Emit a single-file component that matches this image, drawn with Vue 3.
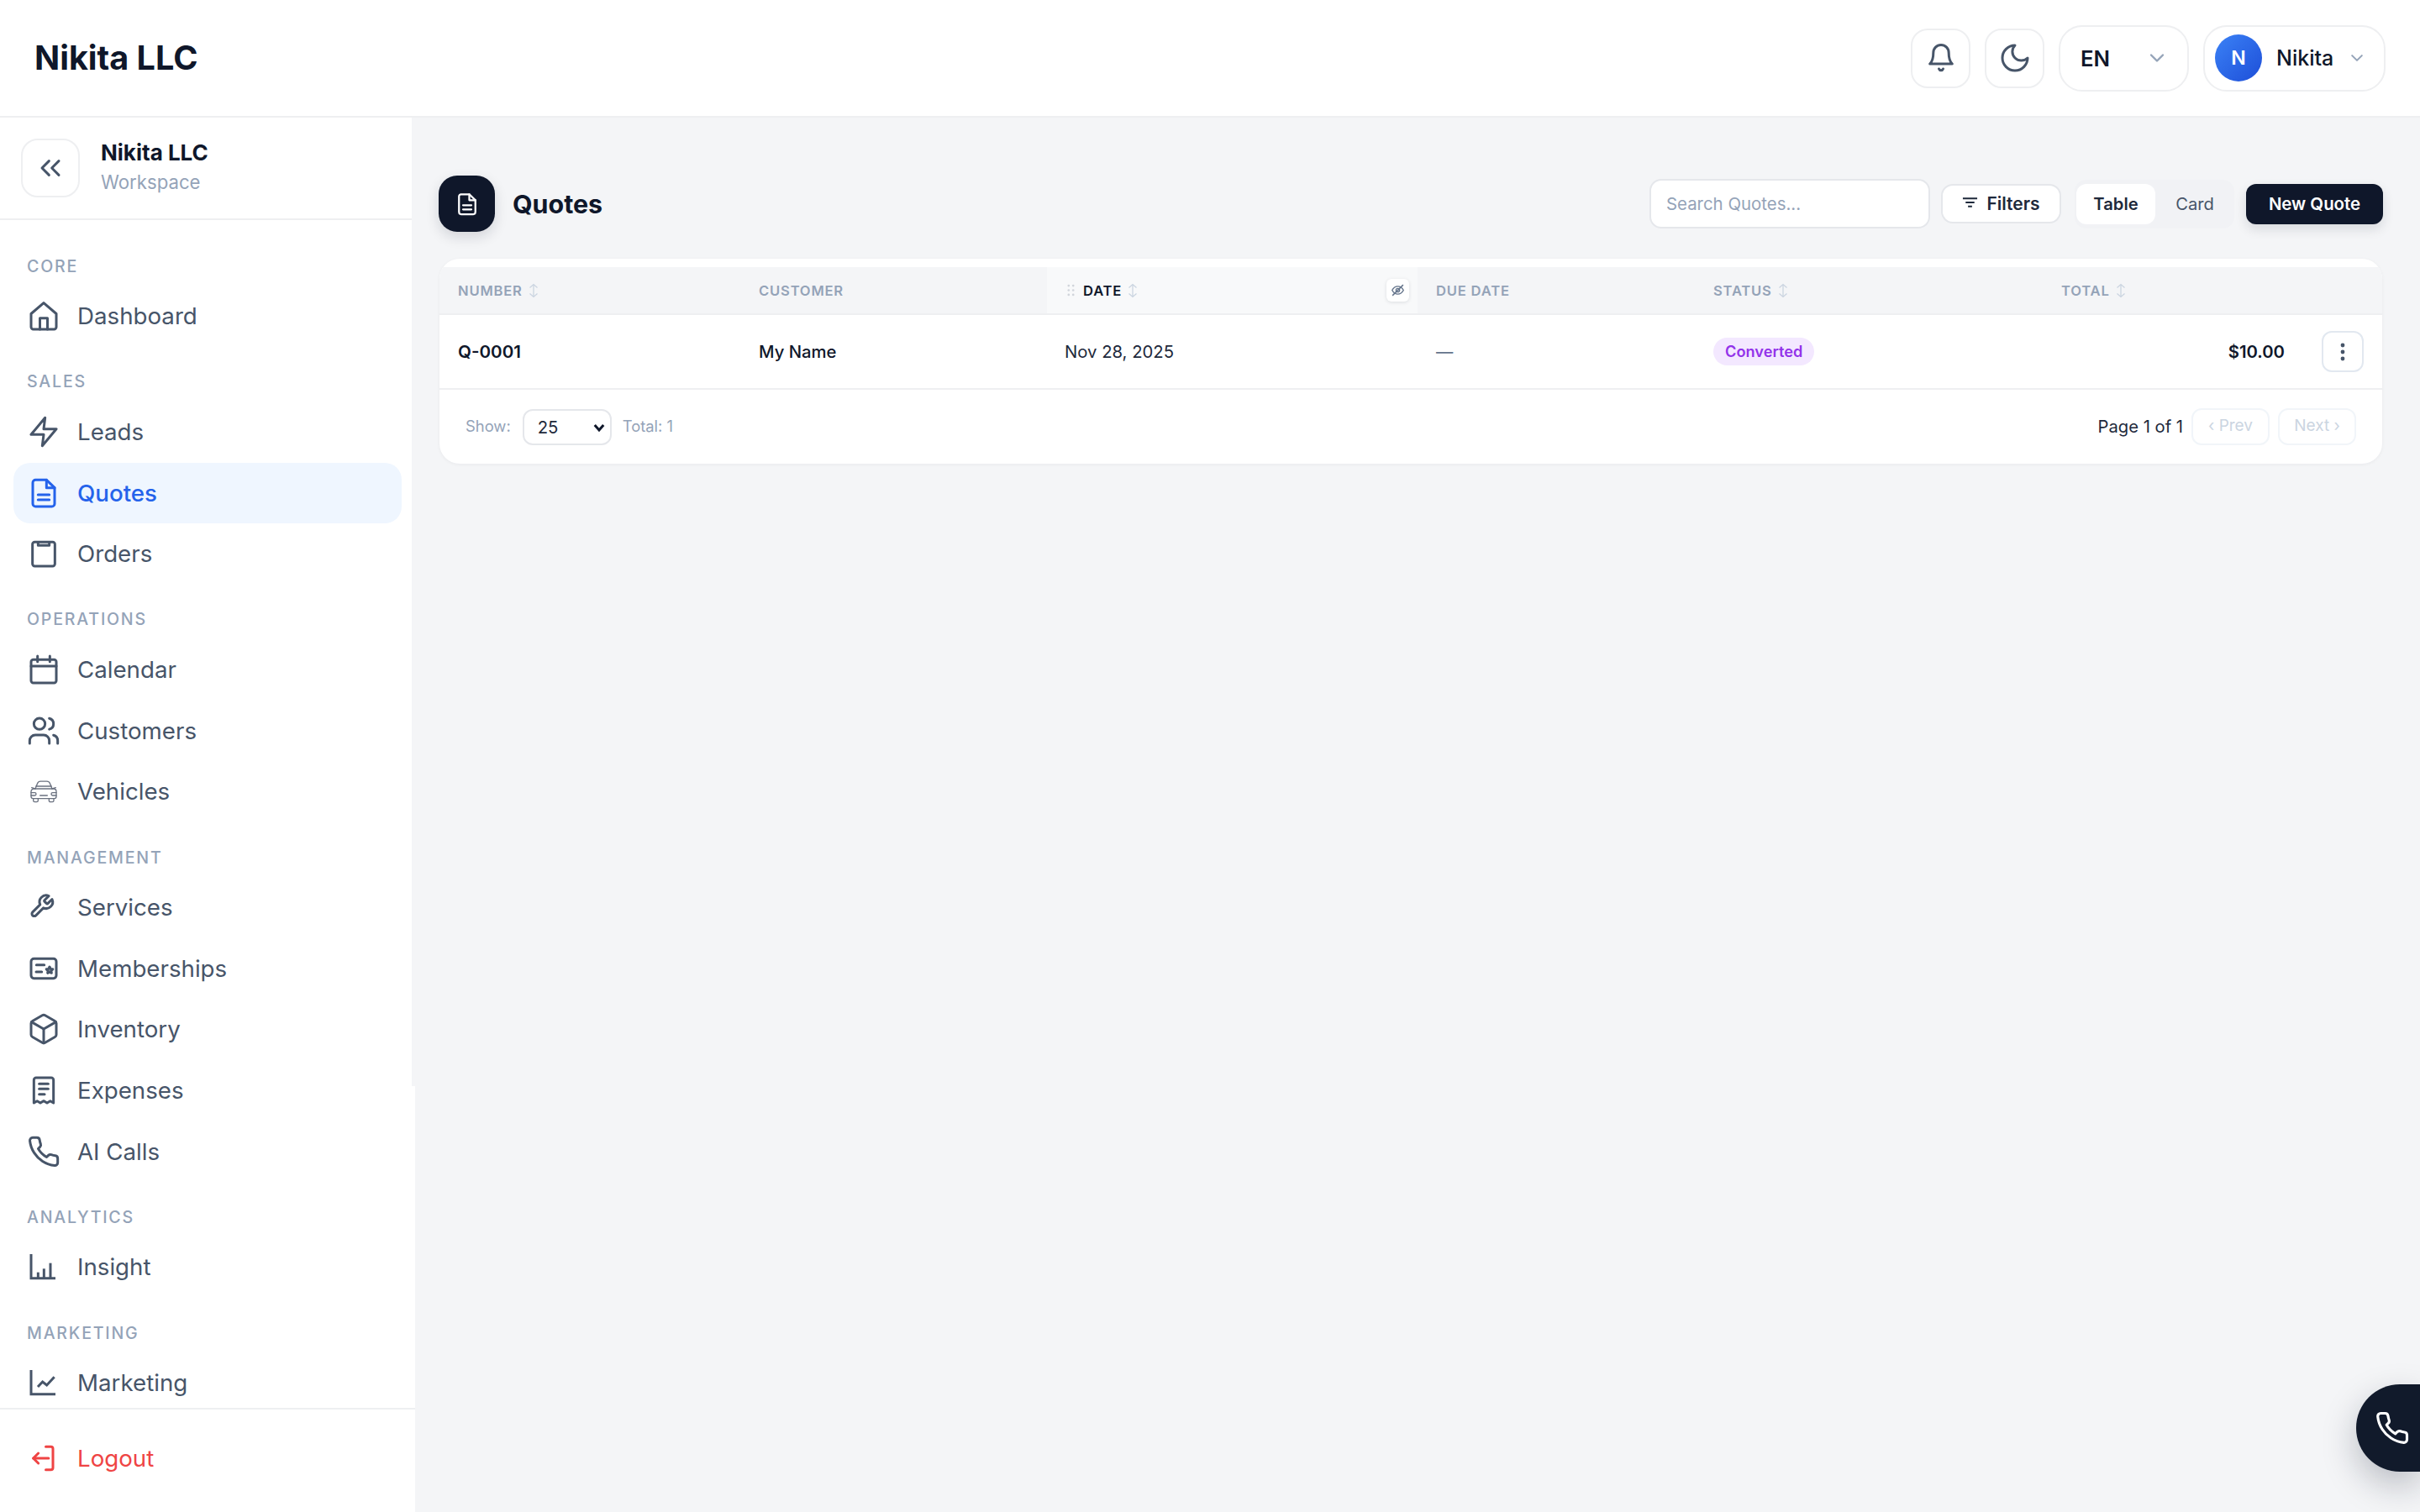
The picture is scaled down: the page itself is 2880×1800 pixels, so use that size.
<script setup>
const sections = [
  { label: 'Core', items: [
    { name: 'Dashboard', icon: ['M3 10.5 12 2.8l9 7.7V20a1.6 1.6 0 0 1-1.6 1.6H4.6A1.6 1.6 0 0 1 3 20Z', 'M9.3 21.6v-8h5.4v8'] },
  ] },
  { label: 'Sales', items: [
    { name: 'Leads', icon: ['M13 2 3 14h9l-1 8 10-12h-9l1-8Z'] },
    { name: 'Quotes', active: true, icon: ['M14 2.6H6.2A2 2 0 0 0 4.2 4.6v15a2 2 0 0 0 2 2h11.6a2 2 0 0 0 2-2V8.2Z', 'M14 2.6v5.6h5.8', 'M8 13.2h8', 'M8 16.8h8'] },
    { name: 'Orders', icon: ['M5.6 3.8h12.8A1.6 1.6 0 0 1 20 5.4v14a1.6 1.6 0 0 1-1.6 1.6H5.6A1.6 1.6 0 0 1 4 19.4v-14a1.6 1.6 0 0 1 1.6-1.6Z', 'M8 4v2.200h8V4'] },
  ] },
  { label: 'Operations', items: [
    { name: 'Calendar', icon: ['M4.6 5h14.8A1.6 1.6 0 0 1 21 6.6v13.4a1.6 1.6 0 0 1-1.6 1.6H4.6A1.6 1.6 0 0 1 3 20V6.6A1.6 1.6 0 0 1 4.6 5Z', 'M7.6 2.4v4', 'M16.4 2.4v4', 'M3 9.6h18'] },
    { name: 'Customers', icon: ['M16 21v-2a4 4 0 0 0-4-4H6a4 4 0 0 0-4 4v2', 'M13 7a4 4 0 1 1-8 0 4 4 0 0 1 8 0Z', 'M22 21v-2a4 4 0 0 0-3-3.87', 'M16 3.13a4 4 0 0 1 0 7.75'] },
    { name: 'Vehicles', thin: true, icon: ['M6 10.2 7.5 6.4a2.4 2.4 0 0 1 2.2-1.5h4.6a2.4 2.4 0 0 1 2.2 1.5L18 10.2', 'M5 10.2h14a2 2 0 0 1 2 2v3.6a1.4 1.4 0 0 1-1.4 1.4H4.400a1.400 1.400 0 0 1-1.400-1.400v-3.600a2 2 0 0 1 2-2Z', 'M6 10.200 3.400 9.400M18 10.200l2.600-.800', 'M6.500 8.400h11', 'M3 13h2.600a1 1 0 0 1 0 2H3M21 13h-2.600a1 1 0 0 0 0 2H21', 'M9.400 15h5.200', 'M4.600 17.200v1.400a1 1 0 0 0 1 1h1.400a1 1 0 0 0 1-1v-1.400M15.800 17.200v1.400a1 1 0 0 0 1 1h1.400a1 1 0 0 0 1-1v-1.400'] },
  ] },
  { label: 'Management', items: [
    { name: 'Services', icon: ['M12.7 6.900a.78.78 0 0 0 0 1.100l1.250 1.250a.78.78 0 0 0 1.100 0l2.940-2.940a4.680 4.680 0 0 1-6.190 6.190l-5.390 5.390a1.650 1.650 0 0 1-2.340-2.340l5.390-5.390a4.680 4.680 0 0 1 6.190-6.190l-2.930 2.930Z'] },
    { name: 'Memberships', icon: ['M5 5h14a2 2 0 0 1 2 2v10a2 2 0 0 1-2 2H5a2 2 0 0 1-2-2V7a2 2 0 0 1 2-2Z', 'M6.800 9.400h5.600', 'M6.600 14.400h4', 'M16.200 10.800l.7 1.500 1.600.2-1.200 1.100.3 1.600-1.400-.8-1.400.8.3-1.600-1.200-1.100 1.600-.2Z'] },
    { name: 'Inventory', icon: ['M21 8a2 2 0 0 0-1-1.730l-7-4a2 2 0 0 0-2 0l-7 4A2 2 0 0 0 3 8v8a2 2 0 0 0 1 1.730l7 4a2 2 0 0 0 2 0l7-4A2 2 0 0 0 21 16Z', 'M3.300 7 12 12l8.700-5', 'M12 22V12'] },
    { name: 'Expenses', icon: ['M5 21V4.600A1.600 1.600 0 0 1 6.600 3h10.800A1.600 1.600 0 0 1 19 4.600V21l-2.300-1.400-2.300 1.400-2.400-1.400-2.400 1.400-2.300-1.400Z', 'M8.800 7.400h6.400', 'M8.800 11h6.400', 'M8.800 14.800h3.800'] },
    { name: 'AI Calls', icon: ['M22 16.920v3a2 2 0 0 1-2.180 2 19.790 19.790 0 0 1-8.630-3.070 19.500 19.500 0 0 1-6-6 19.790 19.790 0 0 1-3.070-8.670A2 2 0 0 1 4.110 2h3a2 2 0 0 1 2 1.720c.127.960.361 1.903.700 2.810a2 2 0 0 1-.450 2.110L8.090 9.910a16 16 0 0 0 6 6l1.270-1.270a2 2 0 0 1 2.110-.450c.907.339 1.850.573 2.810.700A2 2 0 0 1 22 16.920Z'] },
  ] },
  { label: 'Analytics', items: [
    { name: 'Insight', square: true, icon: ['M3 3v17.200h17.400', 'M8 20v-4', 'M12.200 20v-6.600', 'M16.800 20v-10.600'] },
  ] },
  { label: 'Marketing', items: [
    { name: 'Marketing', square: true, icon: ['M3 3v17.200h17.400', 'M7.800 15l3.400-3.600 3 2.400 5.400-5.800'] },
  ] },
];

const columns = [
  { key: 'number', label: 'Number', sort: true },
  { key: 'customer', label: 'Customer' },
  { key: 'date', label: 'Date', sort: true, hovered: true },
  { key: 'due', label: 'Due Date' },
  { key: 'status', label: 'Status', sort: true },
  { key: 'total', label: 'Total', sort: true },
  { key: 'actions', label: '' },
];
</script>

<template>
  <div class="app">
    <header class="topbar">
      <div class="brand">Nikita LLC</div>
      <div class="topbar-actions">
        <button type="button" class="icon-btn" aria-label="Notifications">
          <svg class="icon" viewBox="0 0 24 24"><path d="M6.500 8.200a5.500 5.500 0 0 1 11 0c0 4.200.8 6.400 2.500 8H4c1.700-1.600 2.500-3.800 2.500-8Z" /><path d="M10.500 19.800a1.600 1.600 0 0 0 3 0" /></svg>
        </button>
        <button type="button" class="icon-btn" aria-label="Theme">
          <svg class="icon" viewBox="0 0 24 24"><path d="M12 3a6 6 0 0 0 9 9 9 9 0 1 1-9-9Z" /></svg>
        </button>
        <button type="button" class="pill-btn lang-btn">
          <span>EN</span>
          <svg class="chev" viewBox="0 0 24 24"><path d="m5 8.500 7 7 7-7" /></svg>
        </button>
        <button type="button" class="pill-btn user-btn">
          <span class="avatar">N</span>
          <span class="user-name">Nikita</span>
          <svg class="chev chev-sm" viewBox="0 0 24 24"><path d="m5 8.500 7 7 7-7" /></svg>
        </button>
      </div>
    </header>

    <div class="body">
      <aside class="sidebar">
        <div class="workspace">
          <button type="button" class="collapse-btn" aria-label="Collapse">
            <svg class="icon" viewBox="0 0 24 24"><path d="m11 17-5-5 5-5" /><path d="m18 17-5-5 5-5" /></svg>
          </button>
          <div class="ws-text">
            <div class="ws-name">Nikita LLC</div>
            <div class="ws-sub">Workspace</div>
          </div>
        </div>

        <nav class="nav">
          <section v-for="s in sections" :key="s.label" class="nav-section">
            <div class="nav-label">{{ s.label }}</div>
            <a
              v-for="item in s.items"
              :key="item.name"
              class="nav-item"
              :class="{ active: item.active }"
            >
              <svg class="icon" :class="{ thin: item.thin, square: item.square }" viewBox="0 0 24 24">
                <path v-for="d in item.icon" :key="d" :d="d" />
              </svg>
              <span>{{ item.name }}</span>
            </a>
          </section>
        </nav>

        <div class="sidebar-foot">
          <a class="nav-item logout">
            <svg class="icon" viewBox="0 0 24 24"><path d="M13.500 3.700h3.600a1.500 1.500 0 0 1 1.500 1.500v13.600a1.500 1.500 0 0 1-1.500 1.500h-3.600" /><path d="M15.500 12H4.600" /><path d="M8.200 8.400 4.600 12l3.600 3.600" /></svg>
            <span>Logout</span>
          </a>
        </div>
      </aside>

      <main class="main">
        <div class="page-head">
          <div class="page-title">
            <span class="title-icon">
              <svg viewBox="0 0 24 24"><path d="M14 2.600H6.200a2 2 0 0 0-2 2v15a2 2 0 0 0 2 2h11.600a2 2 0 0 0 2-2V8.200Z" /><path d="M14 2.600v5.600h5.800" /><path d="M8 13h8" /><path d="M8 17h8" /></svg>
            </span>
            <h1>Quotes</h1>
          </div>
          <div class="toolbar">
            <input class="search" type="text" placeholder="Search Quotes..." />
            <button type="button" class="filter-btn">
              <svg viewBox="0 0 20 14"><path d="M1 2h18M4.500 7h11M7.500 12h5" /></svg>
              Filters
            </button>
            <div class="view-toggle">
              <span class="view-opt on">Table</span>
              <span class="view-opt">Card</span>
            </div>
            <button type="button" class="new-btn">New Quote</button>
          </div>
        </div>

        <div class="card">
          <table class="table">
            <colgroup>
              <col v-for="c in columns" :key="c.key" :class="'col-' + c.key" />
            </colgroup>
            <thead>
              <tr>
                <th v-for="c in columns" :key="c.key" :class="{ hovered: c.hovered }">
                  <div class="th-inner">
                    <svg v-if="c.hovered" class="grip" viewBox="0 0 10 16">
                      <circle cx="2" cy="2" r="1.500" /><circle cx="8" cy="2" r="1.500" />
                      <circle cx="2" cy="8" r="1.500" /><circle cx="8" cy="8" r="1.500" />
                      <circle cx="2" cy="14" r="1.500" /><circle cx="8" cy="14" r="1.500" />
                    </svg>
                    <span>{{ c.label }}</span>
                    <svg v-if="c.sort" class="sort" viewBox="0 0 12 18"><path d="M6 1.500v15M1.500 5.500 6 1.500l4.500 4M1.500 12.500 6 16.500l4.500-4" /></svg>
                    <span v-if="c.hovered" class="hide-col">
                      <svg viewBox="0 0 24 24"><path d="M3 21 21 3" /><path d="M2.500 12S6 5.500 12 5.500 21.500 12 21.500 12 18 18.500 12 18.500 2.500 12 2.500 12Z" /><path d="M15 12a3 3 0 1 1-6 0 3 3 0 0 1 6 0Z" /></svg>
                    </span>
                  </div>
                </th>
              </tr>
            </thead>
            <tbody>
              <tr>
                <td class="cell-number">Q-0001</td>
                <td class="cell-customer">My Name</td>
                <td class="cell-date">Nov 28, 2025</td>
                <td class="cell-due">—</td>
                <td><span class="badge">Converted</span></td>
                <td class="cell-total">$10.00</td>
                <td>
                  <button type="button" class="kebab" aria-label="Actions">
                    <svg viewBox="0 0 6 24"><circle cx="3" cy="4" r="2.400" /><circle cx="3" cy="12" r="2.400" /><circle cx="3" cy="20" r="2.400" /></svg>
                  </button>
                </td>
              </tr>
            </tbody>
          </table>

          <div class="table-foot">
            <div class="foot-left">
              <span>Show:</span>
              <div class="select-wrap">
                <select class="page-size">
                  <option>25</option>
                  <option>50</option>
                </select>
                <svg viewBox="0 0 24 24"><path d="m5 8 7 8 7-8" /></svg>
              </div>
              <span>Total: 1</span>
            </div>
            <div class="foot-right">
              <span class="page-info">Page 1 of 1</span>
              <button type="button" class="page-btn" disabled>‹ Prev</button>
              <button type="button" class="page-btn" disabled>Next ›</button>
            </div>
          </div>
        </div>
      </main>
    </div>

    <button type="button" class="call-fab" aria-label="Call">
      <svg viewBox="0 0 24 24"><path d="M22 16.920v3a2 2 0 0 1-2.180 2 19.790 19.790 0 0 1-8.630-3.070 19.500 19.500 0 0 1-6-6 19.790 19.790 0 0 1-3.070-8.670A2 2 0 0 1 4.110 2h3a2 2 0 0 1 2 1.720c.127.960.361 1.903.700 2.810a2 2 0 0 1-.450 2.110L8.090 9.910a16 16 0 0 0 6 6l1.270-1.270a2 2 0 0 1 2.110-.450c.907.339 1.850.573 2.810.700A2 2 0 0 1 22 16.920Z" /></svg>
    </button>
  </div>
</template>

<style>
html,
body {
  margin: 0;
  overflow: hidden;
  background: #f4f5f7;
}
</style>

<style scoped>
.app {
  height: 100vh;
  display: flex;
  flex-direction: column;
  font-family: Inter, "Liberation Sans", sans-serif;
  color: #0f172a;
}

button {
  font-family: inherit;
  cursor: pointer;
}

.icon {
  width: 40px;
  height: 40px;
  flex: none;
  fill: none;
  stroke: currentColor;
  stroke-width: 1.8;
  stroke-linecap: round;
  stroke-linejoin: round;
}

.icon.thin {
  stroke-width: 0.8;
  color: #6b7280;
}

.icon.square {
  stroke-linecap: butt;
  stroke-linejoin: miter;
}

/* top bar */
.topbar {
  height: 138px;
  flex: none;
  display: flex;
  align-items: center;
  justify-content: space-between;
  padding: 0 41px;
  background: #fff;
  border-bottom: 2px solid #eeeff1;
}

.brand {
  font-size: 39.600px;
  font-weight: 700;
}

.topbar-actions {
  display: flex;
  align-items: center;
  gap: 17px;
}

.icon-btn {
  width: 71px;
  height: 71px;
  padding: 0;
  display: flex;
  align-items: center;
  justify-content: center;
  background: #fff;
  border: 2px solid #eeeff1;
  border-radius: 20px;
  color: #475569;
}

.pill-btn {
  height: 79px;
  display: flex;
  align-items: center;
  background: #fff;
  border: 2px solid #eeeff1;
  border-radius: 28px;
  color: #0f172a;
  font-size: 25.700px;
  font-weight: 600;
}

.lang-btn {
  width: 155px;
  padding: 0 24px;
  justify-content: space-between;
}

.user-btn {
  width: 217px;
  padding: 0 22px 0 12px;
}

.avatar {
  width: 56px;
  height: 56px;
  border-radius: 50%;
  flex: none;
  display: flex;
  align-items: center;
  justify-content: center;
  background: linear-gradient(135deg, #3b82f6, #1d4ed8);
  color: #fff;
  font-size: 23px;
}

.user-name {
  margin-left: 17px;
  flex: 1;
  text-align: left;
  font-size: 25px;
  font-weight: 500;
}

.chev {
  width: 24px;
  height: 24px;
  fill: none;
  stroke: #94a3b8;
  stroke-width: 2.400;
  stroke-linecap: round;
  stroke-linejoin: round;
}

.chev-sm {
  width: 20px;
  height: 20px;
}

.body {
  flex: 1;
  min-height: 0;
  display: flex;
}

/* sidebar */
.sidebar {
  position: relative;
  width: 494px;
  flex: none;
  display: flex;
  flex-direction: column;
  background: #fff;
}

.sidebar::after {
  content: "";
  position: absolute;
  top: 0;
  right: 0;
  width: 4px;
  height: 1153px;
  background: #f4f5f7;
}

.workspace {
  height: 120px;
  flex: none;
  display: flex;
  align-items: center;
  gap: 25px;
  padding-left: 25px;
  margin-right: 4px;
  border-bottom: 2px solid #eeeff1;
}

.collapse-btn {
  width: 70px;
  height: 70px;
  padding: 0;
  display: flex;
  align-items: center;
  justify-content: center;
  background: #fff;
  border: 2px solid #eeeff1;
  border-radius: 20px;
  color: #475569;
}

.ws-text {
  margin-top: -3px;
}

.ws-name {
  font-size: 26px;
  font-weight: 700;
  line-height: 36px;
}

.ws-sub {
  font-size: 22.200px;
  line-height: 34px;
  color: #94a3b8;
}

.nav {
  flex: 1;
  min-height: 0;
  overflow: hidden;
  padding: 42.500px 16px 0;
  width: 462px;
}

.nav-section {
  display: flex;
  flex-direction: column;
  gap: 0.600px;
  margin-bottom: 30.300px;
}

.nav-label {
  height: 24px;
  line-height: 24px;
  margin-bottom: 11px;
  padding-left: 16px;
  font-size: 19.600px;
  font-weight: 500;
  letter-spacing: 1.800px;
  text-transform: uppercase;
  color: #94a3b8;
}

.nav-item {
  height: 72px;
  flex: none;
  display: flex;
  align-items: center;
  gap: 20px;
  padding-left: 16px;
  border-radius: 20px;
  font-size: 27.700px;
  color: #475569;
}

.nav-item.active {
  background: #eff6ff;
  color: #2563eb;
  font-weight: 500;
}

.sidebar-foot {
  height: 124px;
  flex: none;
  padding: 22px 16px 0;
  box-sizing: border-box;
  border-top: 2px solid #eeeff1;
}

.logout {
  color: #ef4444;
}

/* main */
.main {
  flex: 1;
  min-width: 0;
  padding: 69px 45px 0 29px;
}

.page-head {
  height: 67px;
  display: flex;
  align-items: center;
  justify-content: space-between;
  margin-bottom: 32px;
}

.page-title {
  display: flex;
  align-items: center;
  gap: 21px;
  margin-left: -1px;
}

.page-title h1 {
  margin: 0;
  font-size: 30.400px;
  font-weight: 700;
}

.title-icon {
  width: 67px;
  height: 67px;
  border-radius: 22px;
  display: flex;
  align-items: center;
  justify-content: center;
  background: #0f172a;
  box-shadow: 0 6px 16px rgba(15, 23, 42, 0.14);
}

.title-icon svg {
  width: 30px;
  height: 30px;
  fill: none;
  stroke: #fff;
  stroke-width: 1.800;
  stroke-linecap: round;
  stroke-linejoin: round;
}

.toolbar {
  display: flex;
  align-items: center;
  margin-right: -1px;
}

.search {
  width: 334px;
  height: 59px;
  box-sizing: border-box;
  padding: 0 18px;
  margin-right: 13px;
  background: #fff;
  border: 2px solid #e5e7eb;
  border-radius: 14px;
  outline: none;
  font-family: inherit;
  font-size: 20.400px;
  color: #0f172a;
}

.search::placeholder {
  color: #94a3b8;
}

.filter-btn {
  width: 143px;
  height: 47px;
  padding: 0;
  margin-right: 16px;
  display: flex;
  align-items: center;
  justify-content: center;
  gap: 10px;
  background: #fff;
  border: 2px solid #e5e7eb;
  border-radius: 14px;
  font-size: 21px;
  font-weight: 600;
  color: #1e293b;
}

.filter-btn svg {
  width: 19px;
  height: 14px;
  margin-top: -4px;
  fill: none;
  stroke: #1e293b;
  stroke-width: 2;
}

.view-toggle {
  width: 190px;
  height: 58px;
  box-sizing: border-box;
  padding: 5px 2px;
  margin-right: 14px;
  display: flex;
  background: #f1f2f5;
  border-radius: 14px;
}

.view-opt {
  flex: 0 0 94px;
  display: flex;
  align-items: center;
  justify-content: center;
  border-radius: 12px;
  font-size: 20.200px;
  color: #475569;
}

.view-opt.on {
  background: #fff;
  color: #1e293b;
  font-weight: 600;
}

.new-btn {
  width: 163px;
  height: 48px;
  padding: 0;
  border: none;
  border-radius: 12px;
  background: #0f172a;
  color: #fff;
  font-size: 20.400px;
  font-weight: 600;
  box-shadow: 0 6px 14px rgba(15, 23, 42, 0.12);
}

/* table card */
.card {
  width: 2312px;
  box-sizing: border-box;
  padding-top: 10px;
  overflow: hidden;
  background: #fff;
  border-radius: 24px;
  box-shadow: 0 1px 4px rgba(15, 23, 42, 0.05);
}

.table {
  width: 2312px;
  table-layout: fixed;
  border-collapse: collapse;
}

.col-number { width: 358px; }
.col-customer { width: 365px; }
.col-date { width: 441px; }
.col-due { width: 330px; }
.col-status { width: 414px; }
.col-total { width: 310px; }
.col-actions { width: 94px; }

th {
  height: 55px;
  padding: 0 22px;
  background: #f4f5f7;
  border-bottom: 2px solid #eeeff1;
  text-align: left;
  font-size: 16.600px;
  font-weight: 600;
  letter-spacing: 0.800px;
  text-transform: uppercase;
  color: #94a3b8;
}

th.hovered {
  padding-left: 24px;
  padding-right: 10px;
  background: #f8f9fa;
  color: #0f172a;
}

.th-inner {
  display: flex;
  align-items: center;
  gap: 7px;
}

.grip {
  width: 9px;
  height: 15px;
  flex: none;
  margin-right: 3px;
  fill: #d1d5db;
}

.sort {
  width: 12px;
  height: 18px;
  flex: none;
  fill: none;
  stroke: #cbd5e1;
  stroke-width: 1.300;
}

.hide-col {
  width: 27px;
  height: 27px;
  margin-left: auto;
  display: flex;
  align-items: center;
  justify-content: center;
  background: #fff;
  border-radius: 6px;
  box-shadow: 0 1px 4px rgba(15, 23, 42, 0.12);
}

.hide-col svg {
  width: 17px;
  height: 17px;
  fill: none;
  stroke: #64748b;
  stroke-width: 2;
}

td {
  height: 87px;
  padding: 0 22px;
  border-bottom: 2px solid #eeeff1;
  font-size: 20.300px;
  color: #1e293b;
}

.cell-number {
  font-weight: 600;
  font-size: 20.600px;
  color: #0f172a;
}

.cell-customer {
  font-weight: 500;
  color: #0f172a;
}

.cell-date {
  padding-left: 21px;
}

.cell-due {
  color: #64748b;
}

.cell-total {
  text-align: right;
  font-weight: 600;
  color: #0f172a;
}

.badge {
  display: inline-block;
  padding: 0 14px;
  height: 33px;
  line-height: 33px;
  border-radius: 17px;
  background: #f3e8ff;
  color: #9333ea;
  font-size: 18.200px;
  font-weight: 600;
}

.kebab {
  width: 50px;
  height: 49px;
  padding: 0;
  display: flex;
  align-items: center;
  justify-content: center;
  background: #fff;
  border: 2px solid #e2e8f0;
  border-radius: 12px;
}

.kebab svg {
  width: 6px;
  height: 24px;
  fill: #475569;
}

.table-foot {
  height: 88px;
  display: flex;
  align-items: center;
  justify-content: space-between;
  padding: 0 31px;
}

.foot-left {
  display: flex;
  align-items: center;
  gap: 13px;
  padding-bottom: 3px;
  font-size: 18.400px;
  color: #94a3b8;
}

.select-wrap {
  position: relative;
  width: 106px;
  height: 43px;
  margin-top: 4px;
  margin-left: 1px;
}

.select-wrap svg {
  position: absolute;
  right: 6px;
  top: 13px;
  width: 18px;
  height: 18px;
  fill: none;
  stroke: #0f172a;
  stroke-width: 4;
  pointer-events: none;
}

.page-size {
  width: 100%;
  height: 100%;
  box-sizing: border-box;
  padding: 0 0 0 16px;
  appearance: none;
  background: #fff;
  border: 2px solid #e5e7eb;
  border-radius: 12px;
  outline: none;
  font-family: inherit;
  font-size: 20.300px;
  color: #1e293b;
}

.foot-right {
  display: flex;
  align-items: center;
  gap: 8px;
}

.page-info {
  margin: -2px 2px 0 0;
  font-size: 20.200px;
  color: #1e293b;
}

.page-btn {
  width: 93px;
  height: 44px;
  padding: 0 0 3px;
  background: #fff;
  border: 2px solid #f1f5f9;
  border-radius: 12px;
  font-size: 19px;
  color: #cbd5e1;
}

.page-btn + .page-btn {
  margin-left: 2px;
}

/* floating call button */
.call-fab {
  position: fixed;
  right: 0;
  bottom: 48px;
  width: 76px;
  height: 104px;
  padding: 0 0 0 22px;
  display: flex;
  align-items: center;
  border: none;
  border-radius: 52px 0 0 52px;
  background: #111a2b;
  box-shadow: 0 16px 40px rgba(15, 23, 42, 0.25);
}

.call-fab svg {
  width: 42px;
  height: 42px;
  fill: none;
  stroke: #fff;
  stroke-width: 1.800;
  stroke-linecap: round;
  stroke-linejoin: round;
}
</style>
